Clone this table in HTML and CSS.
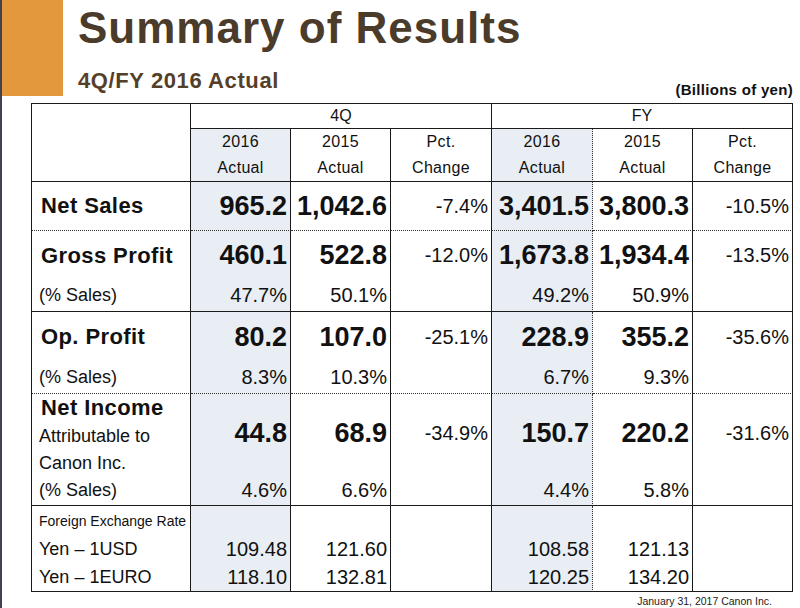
FILE: index.html
```html
<!DOCTYPE html>
<html lang="en">
<head>
<meta charset="utf-8">
<title>Summary of Results</title>
<link rel="stylesheet" href="styles.css">
</head>
<body>
<header class="top">
  <div class="accent"></div>
  <div class="titles">
    <h1 class="title">Summary of Results</h1>
    <h2 class="subtitle">4Q/FY 2016 Actual</h2>
  </div>
  <div class="unit">(Billions of yen)</div>
</header>

<div class="table">
  <div class="row head1">
    <div class="c corner"></div>
    <div class="c grp g4q">4Q</div>
    <div class="c grp gfy">FY</div>
  </div>
  <div class="row head2">
    <div class="c hd hl"><div class="ln">2016</div><div class="ln">Actual</div></div>
    <div class="c hd"><div class="ln">2015</div><div class="ln">Actual</div></div>
    <div class="c hd"><div class="ln">Pct.</div><div class="ln">Change</div></div>
    <div class="c hd hl dot-r"><div class="ln">2016</div><div class="ln">Actual</div></div>
    <div class="c hd"><div class="ln">2015</div><div class="ln">Actual</div></div>
    <div class="c hd"><div class="ln">Pct.</div><div class="ln">Change</div></div>
  </div>

  <div class="row ns">
    <div class="c lbl dot-b"><div class="ln lab-b">Net Sales</div></div>
    <div class="c num hl dot-b"><div class="ln big">965.2</div></div>
    <div class="c num dot-b"><div class="ln big">1,042.6</div></div>
    <div class="c num dot-b"><div class="ln val">-7.4%</div></div>
    <div class="c num hl dot-r dot-b"><div class="ln big">3,401.5</div></div>
    <div class="c num dot-b"><div class="ln big">3,800.3</div></div>
    <div class="c num dot-b"><div class="ln val">-10.5%</div></div>
  </div>

  <div class="row gp">
    <div class="c lbl"><div class="ln l1 lab-b">Gross Profit</div><div class="ln l2 lab">(% Sales)</div></div>
    <div class="c num hl"><div class="ln l1 big">460.1</div><div class="ln l2 val">47.7%</div></div>
    <div class="c num"><div class="ln l1 big">522.8</div><div class="ln l2 val">50.1%</div></div>
    <div class="c num"><div class="ln l1 val">-12.0%</div></div>
    <div class="c num hl dot-r"><div class="ln l1 big">1,673.8</div><div class="ln l2 val">49.2%</div></div>
    <div class="c num"><div class="ln l1 big">1,934.4</div><div class="ln l2 val">50.9%</div></div>
    <div class="c num"><div class="ln l1 val">-13.5%</div></div>
  </div>

  <div class="row op">
    <div class="c lbl dot-b"><div class="ln l1 lab-b">Op. Profit</div><div class="ln l2 lab">(% Sales)</div></div>
    <div class="c num hl dot-b"><div class="ln l1 big">80.2</div><div class="ln l2 val">8.3%</div></div>
    <div class="c num dot-b"><div class="ln l1 big">107.0</div><div class="ln l2 val">10.3%</div></div>
    <div class="c num dot-b"><div class="ln l1 val">-25.1%</div></div>
    <div class="c num hl dot-r dot-b"><div class="ln l1 big">228.9</div><div class="ln l2 val">6.7%</div></div>
    <div class="c num dot-b"><div class="ln l1 big">355.2</div><div class="ln l2 val">9.3%</div></div>
    <div class="c num dot-b"><div class="ln l1 val">-35.6%</div></div>
  </div>

  <div class="row ni">
    <div class="c lbl">
      <div class="ln n1 lab-b">Net Income</div>
      <div class="ln n2 lab">Attributable to</div>
      <div class="ln n3 lab">Canon Inc.</div>
      <div class="ln n4 lab">(% Sales)</div>
    </div>
    <div class="c num hl"><div class="ln main big">44.8</div><div class="ln n4 val">4.6%</div></div>
    <div class="c num"><div class="ln main big">68.9</div><div class="ln n4 val">6.6%</div></div>
    <div class="c num"><div class="ln main val">-34.9%</div></div>
    <div class="c num hl dot-r"><div class="ln main big">150.7</div><div class="ln n4 val">4.4%</div></div>
    <div class="c num"><div class="ln main big">220.2</div><div class="ln n4 val">5.8%</div></div>
    <div class="c num"><div class="ln main val">-31.6%</div></div>
  </div>

  <div class="row fx">
    <div class="c lbl">
      <div class="ln f1 fxh">Foreign Exchange Rate</div>
      <div class="ln f2 lab">Yen – 1USD</div>
      <div class="ln f3 lab">Yen – 1EURO</div>
    </div>
    <div class="c num hl"><div class="ln f2 val">109.48</div><div class="ln f3 val">118.10</div></div>
    <div class="c num"><div class="ln f2 val">121.60</div><div class="ln f3 val">132.81</div></div>
    <div class="c num"></div>
    <div class="c num hl dot-r"><div class="ln f2 val">108.58</div><div class="ln f3 val">120.25</div></div>
    <div class="c num"><div class="ln f2 val">121.13</div><div class="ln f3 val">134.20</div></div>
    <div class="c num"></div>
  </div>
</div>

<p class="footer">January 31, 2017 Canon Inc.</p>
</body>
</html>
```

FILE: styles.css
```css
* { box-sizing: border-box; }

html, body {
  margin: 0;
  padding: 0;
  background: #ffffff;
}

body {
  width: 800px;
  height: 608px;
  overflow: hidden;
  border-left: 2px solid #3e434c;
  font-family: "Liberation Sans", Arial, sans-serif;
  color: #111111;
}

/* ---------- header ---------- */
.top {
  display: flex;
  align-items: flex-start;
  height: 103px;
  padding-right: 7px;
}

.accent {
  flex: none;
  width: 61px;
  height: 96px;
  background: #e4983d;
}

.titles {
  margin-left: 15px;
  padding-top: 3px;
}

.title {
  margin: 0;
  font-size: 44px;
  line-height: 50px;
  font-weight: bold;
  letter-spacing: 1px;
  color: #4b3b2a;
}

.subtitle {
  margin: 13px 0 0;
  font-size: 22px;
  line-height: 30px;
  font-weight: bold;
  letter-spacing: 0.6px;
  color: #563f2a;
}

.unit {
  margin-left: auto;
  align-self: flex-end;
  margin-bottom: 3px;
  font-size: 15px;
  line-height: 20px;
  font-weight: bold;
  letter-spacing: 0.3px;
  color: #111111;
}

/* ---------- table ---------- */
.table {
  display: grid;
  width: max-content;
  margin-left: 29px;
  grid-template-columns: 159px 100px 100px 101px 101px 100px 100px;
  grid-template-rows: 25px 53px 49px 81px 82px 112px 86px;
  border-left: 1px solid #1a1a1a;
  border-top: 1px solid #1a1a1a;
}

.row { display: contents; }

.c {
  border-right: 1px solid #1a1a1a;
  border-bottom: 1px solid #1a1a1a;
  min-width: 0;
}

.dot-b { border-bottom: 1px dotted #333333; }
.dot-r { border-right: 1px dotted #333333; }

.hl { background: #e8eef3; }

.corner { grid-row: span 2; }

.grp {
  grid-column: span 3;
  text-align: center;
  font-size: 16px;
  line-height: 24px;
}

.hd {
  text-align: center;
  font-size: 16px;
  letter-spacing: 0.3px;
}
.hd .ln { height: 26px; line-height: 26px; }

.lbl { padding-left: 7px; text-align: left; }
.num { padding-right: 3px; text-align: right; }

.ln { white-space: nowrap; }

.lab-b {
  font-size: 22px;
  font-weight: bold;
  letter-spacing: 0.4px;
  padding-left: 2px;
}
.lab { font-size: 18px; }
.big { font-size: 27px; font-weight: bold; }
.val { font-size: 20px; }
.fxh { font-size: 14px; }

/* row line boxes */
.ns .ln { height: 48px; line-height: 48px; }

.gp .l1 { height: 49px; line-height: 49px; }
.op .l1 { height: 50px; line-height: 50px; }
.gp .l2, .op .l2 { height: 31px; line-height: 31px; }

.ni .n1 { height: 28px; line-height: 28px; }
.ni .n2 { height: 28px; line-height: 28px; }
.ni .n3 { height: 27px; line-height: 27px; }
.ni .n4 { height: 27px; line-height: 27px; }
.ni .main { height: 79px; line-height: 79px; margin-bottom: 4px; }

.fx .f1 { height: 30px; line-height: 30px; }
.fx .f2 { height: 27px; line-height: 27px; }
.fx .f3 { height: 28px; line-height: 28px; }
.fx .num { padding-top: 30px; }

/* ---------- footer ---------- */
.footer {
  margin: 3px 0 0;
  padding-right: 28px;
  text-align: right;
  font-size: 10.5px;
  line-height: 12px;
  color: #1a1a1a;
}
```
